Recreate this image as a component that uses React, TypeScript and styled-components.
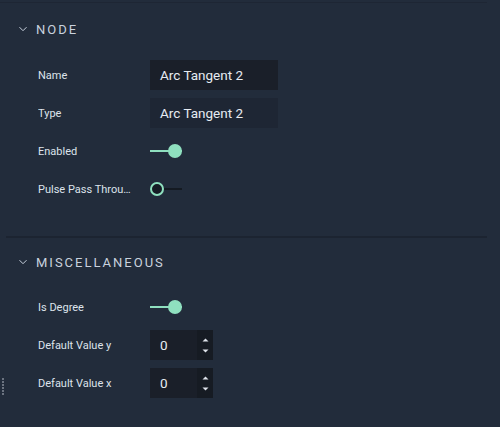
import React from 'react';
import styled, { createGlobalStyle } from 'styled-components';

const GlobalStyle = createGlobalStyle`
  html, body {
    margin: 0;
    padding: 0;
    background: #222c3b;
  }
  body {
    font-family: Roboto, "Liberation Sans", sans-serif;
  }
`;

const Panel = styled.div`
  width: 500px;
  height: 427px;
  background: #222c3b;
  position: relative;
  overflow: hidden;
  padding-top: 2px;
  box-sizing: border-box;
`;

const TopLine = styled.div`
  width: 487px;
  height: 1px;
  background: #1e2634;
`;

const Section = styled.section<{ $top: number; $bottom: number }>`
  padding-top: ${({ $top }) => $top}px;
  padding-bottom: ${({ $bottom }) => $bottom}px;
`;

const Header = styled.div`
  display: flex;
  align-items: center;
  height: 48px;
  padding-left: 18px;
  color: #c9d2de;
  font-size: 13px;
  letter-spacing: 2px;
  font-weight: 400;
`;

const Chevron = styled.svg`
  width: 10px;
  height: 10px;
  margin-right: 8px;
`;

const Rows = styled.div<{ $top: number }>`
  display: flex;
  flex-direction: column;
  gap: 8px;
  padding-left: 38px;
  padding-top: ${({ $top }) => $top}px;
`;

const Row = styled.div`
  display: flex;
  align-items: center;
  height: 30px;
`;

const Label = styled.div`
  width: 112px;
  font-size: 11px;
  color: #dde3eb;
  white-space: nowrap;
  overflow: hidden;
  text-overflow: ellipsis;
  padding-right: 16px;
  box-sizing: border-box;
`;

const TextBox = styled.div<{ $disabled?: boolean }>`
  width: 128px;
  height: 30px;
  box-sizing: border-box;
  padding-left: 10px;
  display: flex;
  align-items: center;
  font-size: 13.5px;
  color: #e6ebf2;
  background: ${({ $disabled }) => ($disabled ? '#1e2634' : '#1a1f29')};
`;

const NumberBox = styled.div`
  width: 63px;
  height: 30px;
  display: flex;
  background: #1a1f29;
`;

const NumberValue = styled.div`
  flex: 1;
  display: flex;
  align-items: center;
  padding-left: 10px;
  font-size: 13.5px;
  color: #e6ebf2;
`;

const Spinner = styled.div`
  width: 16px;
  background: #161b23;
  display: flex;
  flex-direction: column;
  align-items: center;
  justify-content: space-between;
  padding: 8px 0 7px;
  box-sizing: border-box;
`;

const Toggle = styled.div<{ $on: boolean }>`
  position: relative;
  width: 32px;
  height: 14px;
  display: flex;
  align-items: center;

  &::before {
    content: '';
    position: absolute;
    left: 0;
    right: 0;
    height: 2px;
    background: ${({ $on }) => ($on ? '#8fe0bf' : '#141a22')};
  }

  &::after {
    content: '';
    position: absolute;
    box-sizing: border-box;
    width: 14px;
    height: 14px;
    border-radius: 50%;
    left: ${({ $on }) => ($on ? '18px' : '0')};
    background: ${({ $on }) => ($on ? '#8fe0bf' : '#161c25')};
    border: ${({ $on }) => ($on ? 'none' : '2px solid #8fe0bf')};
  }
`;

const Divider = styled.div`
  margin-left: 6px;
  width: 481px;
  height: 2px;
  background: #1c2431;
`;

const Grip = styled.div`
  position: absolute;
  left: 2px;
  top: 378px;
  display: flex;
  flex-direction: column;
  gap: 1px;

  span {
    width: 2px;
    height: 2px;
    background: #6b7380;
  }
`;

const ChevronIcon = () => (
  <Chevron viewBox="0 0 10 10">
    <path d="M1.5 3.2 L5 6.7 L8.5 3.2" stroke="#c9d2de" strokeWidth="1" fill="none" />
  </Chevron>
);

const Arrows = () => (
  <Spinner>
    <svg width="7" height="4" viewBox="0 0 7 4">
      <path d="M0.5 3.5 L3.5 0.5 L6.5 3.5 Z" fill="#dfe4ec" />
    </svg>
    <svg width="7" height="4" viewBox="0 0 7 4">
      <path d="M0.5 0.5 L3.5 3.5 L6.5 0.5 Z" fill="#dfe4ec" />
    </svg>
  </Spinner>
);

export default function App() {
  return (
    <Panel>
      <GlobalStyle />
      <TopLine />
      <Section $top={2} $bottom={32}>
        <Header>
          <ChevronIcon />
          NODE
        </Header>
        <Rows $top={7}>
          <Row>
            <Label>Name</Label>
            <TextBox>Arc Tangent 2</TextBox>
          </Row>
          <Row>
            <Label>Type</Label>
            <TextBox $disabled>Arc Tangent 2</TextBox>
          </Row>
          <Row>
            <Label>Enabled</Label>
            <Toggle $on />
          </Row>
          <Row>
            <Label>Pulse Pass Through</Label>
            <Toggle $on={false} />
          </Row>
        </Rows>
      </Section>
      <Divider />
      <Section $top={0} $bottom={0}>
        <Header>
          <ChevronIcon />
          MISCELLANEOUS
        </Header>
        <Rows $top={6}>
          <Row>
            <Label>Is Degree</Label>
            <Toggle $on />
          </Row>
          <Row>
            <Label>Default Value y</Label>
            <NumberBox>
              <NumberValue>0</NumberValue>
              <Arrows />
            </NumberBox>
          </Row>
          <Row>
            <Label>Default Value x</Label>
            <NumberBox>
              <NumberValue>0</NumberValue>
              <Arrows />
            </NumberBox>
          </Row>
        </Rows>
      </Section>
      <Grip>
        {Array.from({ length: 6 }).map((_, i) => (
          <span key={i} />
        ))}
      </Grip>
    </Panel>
  );
}
